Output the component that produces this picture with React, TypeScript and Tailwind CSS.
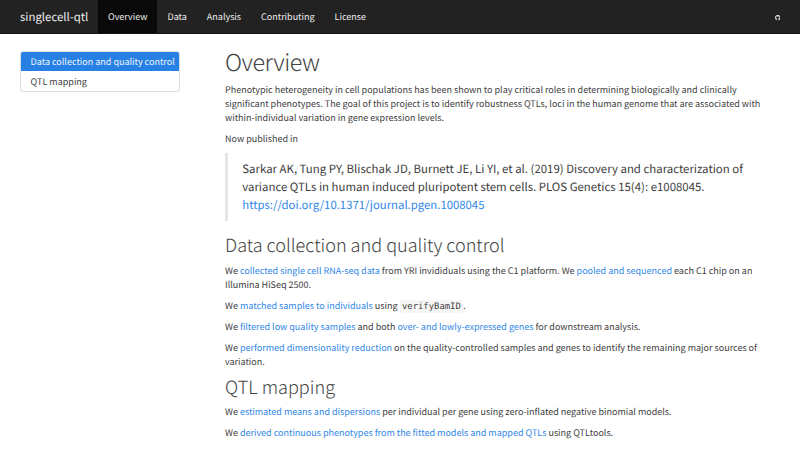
import type { ReactNode } from "react";
import { FaGithub } from "react-icons/fa";

const nav = ["Overview", "Data", "Analysis", "Contributing", "License"];

function Link({ children }: { children: ReactNode }) {
  return <a className="text-[#2f87e8]">{children}</a>;
}

function P({ children }: { children: ReactNode }) {
  return <p className="mb-[7px] text-[9px] leading-[14px] whitespace-nowrap">{children}</p>;
}

export default function App() {
  return (
    <div className="h-[450px] w-[800px] overflow-hidden bg-white font-['Noto_Sans_CJK_SC',sans-serif] text-[#404040] [text-rendering:geometricPrecision]">
      <header className="flex h-[34px] items-stretch border-b border-[#121212] bg-[#222] pl-5 text-[9px] leading-[33px] text-[#eee]">
        <a className="w-[78px] pt-px text-[11.4px]">singlecell-qtl</a>
        <nav className="flex flex-1">
          {nav.map((n, i) => (
            <a key={n} className={i === 0 ? "bg-[#090909] px-[10px]" : "px-[10px]"}>
              {n}
            </a>
          ))}
        </nav>
        <a className="flex items-center pt-[3px] pr-[20px]">
          <FaGithub size={5.5} />
        </a>
      </header>
      <div className="flex">
        <aside className="mt-[17px] ml-5 h-[41px] w-[160px] shrink-0 overflow-hidden rounded-[3px] border border-[#ddd] text-[9px] whitespace-nowrap">
          <div className="-mt-px h-5 bg-[#2780e3] pt-px pl-[9.6px] leading-[20px] text-[#eef5fd]">Data collection and quality control</div>
          <div className="h-5 pt-px pl-[9.6px] leading-[20px]">QTL mapping</div>
        </aside>
        <main className="ml-[45px] w-[555px] pt-[13px]">
          <h1 className="mb-[7px] h-[29px] text-[23.4px] leading-[29px] font-light tracking-[-0.5px] text-[#444]">Overview</h1>
          <P>
            Phenotypic heterogeneity in cell populations has been shown to play critical roles in determining biologically and clinically
            <br />
            significant phenotypes. The goal of this project is to identify robustness QTLs, loci in the human genome that are associated with
            <br />
            within-individual variation in gene expression levels.
          </P>
          <P>Now published in</P>
          <blockquote className="mb-[13px] h-[68px] border-l-[3px] border-[#e6e6e6] pt-[7px] pl-[14.3px] text-[11.43px] leading-[18px] whitespace-nowrap">
            Sarkar AK, Tung PY, Blischak JD, Burnett JE, Li YI, et al. (2019) Discovery and characterization of
            <br />
            variance QTLs in human induced pluripotent stem cells. PLOS Genetics 15(4): e1008045.
            <br />
            <span className="text-[11.35px]">
              <Link>https://doi.org/10.1371/journal.pgen.1008045</Link>
            </span>
          </blockquote>
          <h2 className="mb-[8px] h-[22px] text-[18.08px] leading-[22px] font-light text-[#444]">Data collection and quality control</h2>
          <P>
            We <Link>collected single cell RNA-seq data</Link> from YRI invididuals using the C1 platform. We{" "}
            <Link>pooled and sequenced</Link> each C1 chip on an
            <br />
            Illumina HiSeq 2500.
          </P>
          <P>
            We <Link>matched samples to individuals</Link> using{" "}
            <code className="relative -top-px rounded-[2px] bg-[#f6f6f6] px-[2.4px] py-[1.5px] font-['DejaVu_Sans_Mono',monospace] text-[8.9px] leading-[10px]">verifyBamID</code>.
          </P>
          <P>
            We <Link>filtered low quality samples</Link> and both <Link>over- and lowly-expressed genes</Link> for downstream analysis.
          </P>
          <P>
            We <Link>performed dimensionality reduction</Link> on the quality-controlled samples and genes to identify the remaining major sources of
            <br />
            variation.
          </P>
          <h2 className="-mt-px mb-[8px] h-[22px] pt-px text-[18.08px] leading-[22px] font-light text-[#444]">QTL mapping</h2>
          <P>
            We <Link>estimated means and dispersions</Link> per individual per gene using zero-inflated negative binomial models.
          </P>
          <P>
            We <Link>derived continuous phenotypes from the fitted models and mapped QTLs</Link> using QTLtools.
          </P>
        </main>
      </div>
    </div>
  );
}
